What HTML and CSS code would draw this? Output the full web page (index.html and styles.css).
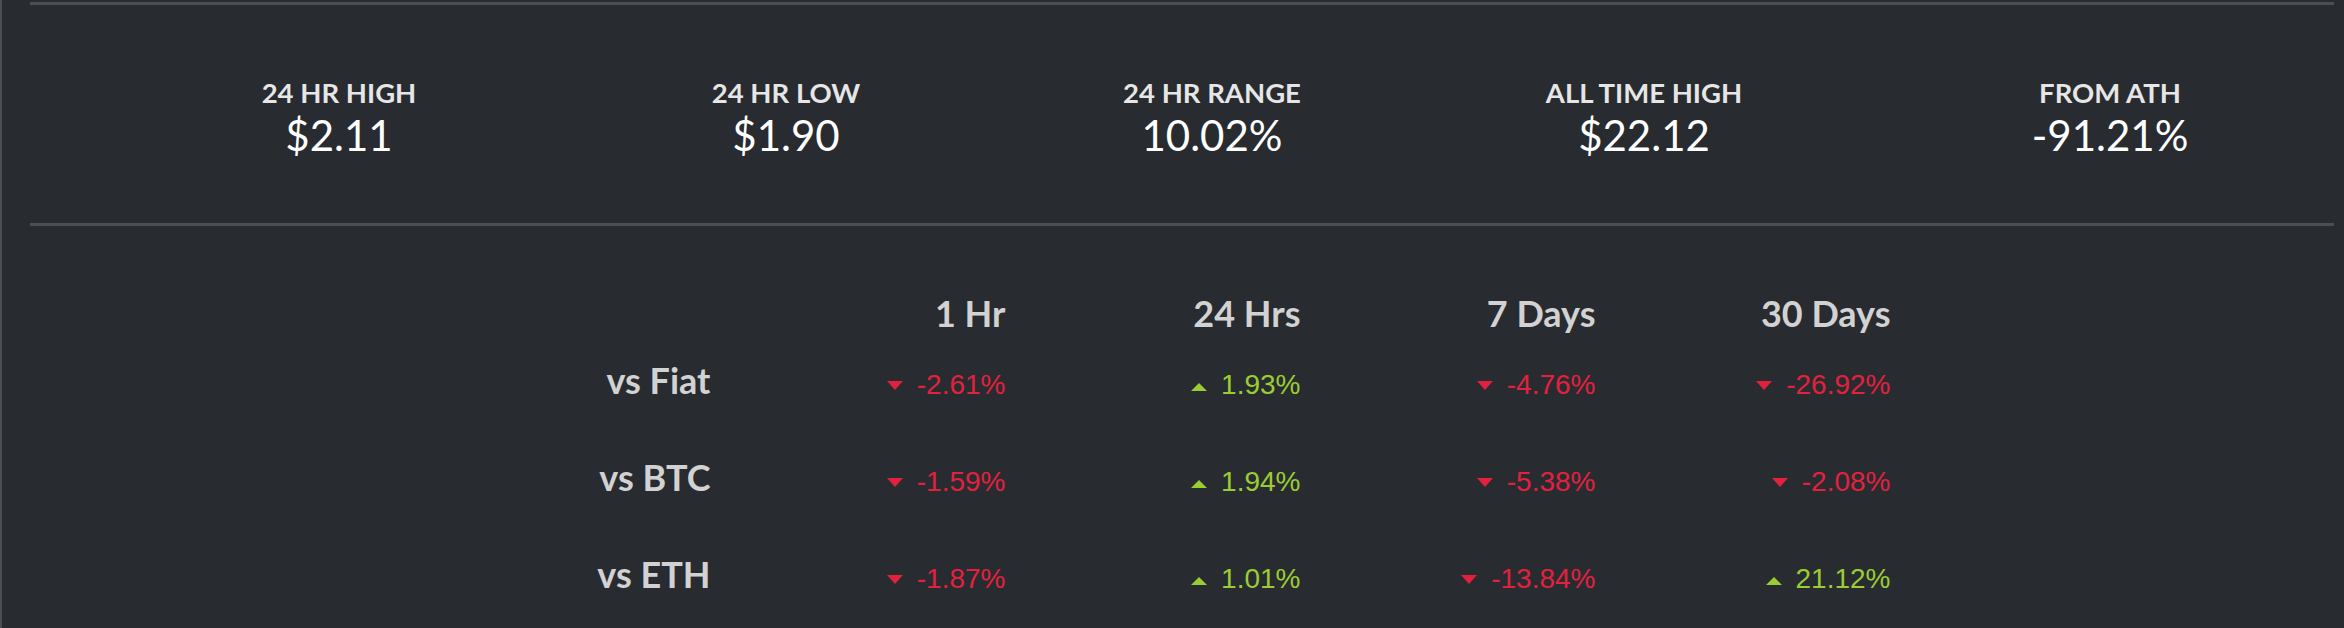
FILE: index.html
```html
<!DOCTYPE html>
<html>
<head>
<meta charset="utf-8">
<link rel="stylesheet" href="styles.css">
</head>
<body>
<div class="panel">
  <div class="rule"></div>
  <div class="stats">
    <div class="stat"><div class="stat-label">24 HR HIGH</div><div class="stat-value">$2.11</div></div>
    <div class="stat"><div class="stat-label">24 HR LOW</div><div class="stat-value">$1.90</div></div>
    <div class="stat"><div class="stat-label">24 HR RANGE</div><div class="stat-value">10.02%</div></div>
    <div class="stat"><div class="stat-label">ALL TIME HIGH</div><div class="stat-value">$22.12</div></div>
    <div class="stat"><div class="stat-label">FROM ATH</div><div class="stat-value">-91.21%</div></div>
  </div>
  <div class="rule"></div>
  <table class="perf">
    <thead>
      <tr><th></th><th>1 Hr</th><th>24 Hrs</th><th>7 Days</th><th>30 Days</th></tr>
    </thead>
    <tbody>
      <tr>
        <th class="row-label">vs Fiat</th>
        <td class="down"><i class="tri"></i>-2.61%</td>
        <td class="up"><i class="tri"></i>1.93%</td>
        <td class="down"><i class="tri"></i>-4.76%</td>
        <td class="down"><i class="tri"></i>-26.92%</td>
      </tr>
      <tr>
        <th class="row-label">vs BTC</th>
        <td class="down"><i class="tri"></i>-1.59%</td>
        <td class="up"><i class="tri"></i>1.94%</td>
        <td class="down"><i class="tri"></i>-5.38%</td>
        <td class="down"><i class="tri"></i>-2.08%</td>
      </tr>
      <tr>
        <th class="row-label">vs ETH</th>
        <td class="down"><i class="tri"></i>-1.87%</td>
        <td class="up"><i class="tri"></i>1.01%</td>
        <td class="down"><i class="tri"></i>-13.84%</td>
        <td class="up"><i class="tri"></i>21.12%</td>
      </tr>
    </tbody>
  </table>
</div>
</body>
</html>
```
FILE: styles.css
```css
html, body {
  margin: 0;
  background: #282b30;
}
body {
  font-family: Lato, "Noto Sans", sans-serif;
  overflow: hidden;
}
.panel {
  border-left: 2px solid #4b4e54;
  padding: 2px 10px 0 28px;
  min-height: 626px;
}
.rule {
  height: 3px;
  background: #4b4e54;
}
.stats {
  display: grid;
  grid-template-columns: 446px 448px 404px 460px 472px;
  margin-left: 86px;
  padding: 71px 0 63px;
  text-align: center;
}
.stat-label {
  font-size: 27.5px;
  font-weight: 700;
  line-height: 1.2;
  color: #e6e6e6;
}
.stat-value {
  font-size: 42px;
  line-height: 1.2;
  color: #ffffff;
  margin-top: 1px;
}
.perf {
  width: 1475px;
  margin: 67px auto 0;
  border-collapse: collapse;
  border-spacing: 0;
  table-layout: fixed;
}
.perf th,
.perf td {
  text-align: right;
  padding: 0 29px 0 0;
  line-height: 41px;
  vertical-align: baseline;
  white-space: nowrap;
}
.perf thead th {
  font-size: 36px;
  font-weight: 700;
  color: #d2d2d2;
}
.perf tbody th,
.perf tbody td {
  padding: 26px 29px 26px 0;
}
.row-label {
  font-size: 36px;
  font-weight: 700;
  color: #d2d2d2;
}
.perf td {
  font-family: "Liberation Sans", Arial, sans-serif;
  font-size: 28px;
}
.down { color: #e2213f; }
.up { color: #9acd32; }
.tri {
  display: inline-block;
  width: 0;
  height: 0;
  border-left: 8px solid transparent;
  border-right: 8px solid transparent;
  margin-right: 14px;
}
.down .tri {
  border-top: 9px solid currentColor;
  vertical-align: 4px;
}
.up .tri {
  border-bottom: 8px solid currentColor;
  vertical-align: 3px;
}
```
